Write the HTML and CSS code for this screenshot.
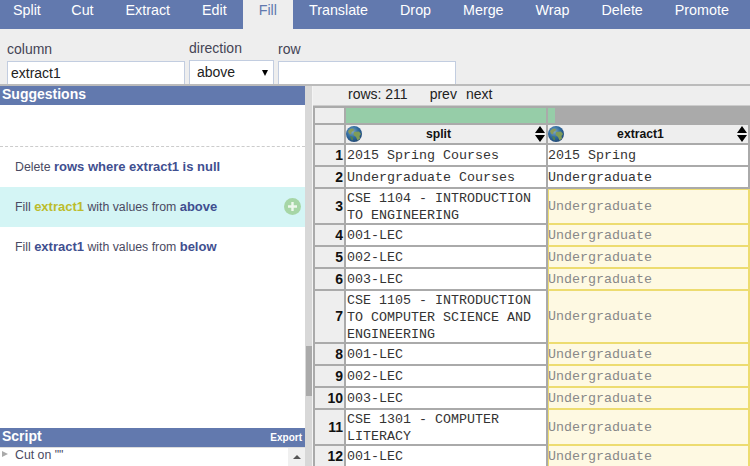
FILE: index.html
```html
<!DOCTYPE html>
<html lang="en">
<head>
    <meta charset="UTF-8">
    <title>Data Wrangler</title>
    <link rel="stylesheet" href="styles.css">
</head>
<body>
    <svg class="defs" width="0" height="0">
        <defs>
            <radialGradient id="sea" cx="0.4" cy="0.35" r="0.75">
                <stop offset="0" stop-color="#7fa8c4"/>
                <stop offset="0.5" stop-color="#2f6a9e"/>
                <stop offset="1" stop-color="#1d3f6b"/>
            </radialGradient>
            <symbol id="globe" viewBox="0 0 16 16">
                <circle cx="8" cy="8" r="8" fill="url(#sea)"/>
                <path d="M2 5 L5 2.5 L8 3 L7.5 5 L5.5 6 L5 8.5 L3 7.5 Z" fill="#8a9a5a"/>
                <path d="M8 6 L13 5.5 L15 8 L13.5 10 L14 12.5 L11.5 14.5 L10 11 L7.5 9 Z" fill="#7f9c58"/>
                <path d="M4 10 L7 11 L7 14.5 L5 13.5 Z" fill="#4f7f55"/>
            </symbol>
            <symbol id="sort" viewBox="0 0 10 16">
                <path d="M5 0 L10 7 L0 7 Z M0 9 L10 9 L5 16 Z" fill="#000"/>
            </symbol>
        </defs>
    </svg>

    <nav class="tabs">
        <a class="tab">Split</a>
        <a class="tab">Cut</a>
        <a class="tab">Extract</a>
        <a class="tab">Edit</a>
        <a class="tab active">Fill</a>
        <a class="tab">Translate</a>
        <a class="tab">Drop</a>
        <a class="tab">Merge</a>
        <a class="tab">Wrap</a>
        <a class="tab">Delete</a>
        <a class="tab">Promote</a>
    </nav>

    <form class="params">
        <div class="field">
            <label for="column">column</label>
            <input type="text" id="column" value="extract1">
        </div>
        <div class="field field-select">
            <label for="direction">direction</label>
            <div class="select-wrap">
                <select id="direction">
                    <option>above</option>
                    <option>below</option>
                </select>
            </div>
        </div>
        <div class="field">
            <label for="row">row</label>
            <input type="text" id="row">
        </div>
    </form>

    <main class="main">
        <section class="left">
            <h2 class="pane-title">Suggestions</h2>
            <div class="suggestions">
                <div class="suggestion"><span>Delete <b>rows where extract1 is null</b></span></div>
                <div class="suggestion selected">
                    <span>Fill <b class="hl">extract1</b> with values from <b>above</b></span>
                    <svg class="add" width="17" height="17" viewBox="0 0 17 17">
                        <circle cx="8.5" cy="8.5" r="8.5" fill="#a6d6a6"/>
                        <path d="M8.5 4 V13 M4 8.5 H13" stroke="#eef8ee" stroke-width="2.4"/>
                    </svg>
                </div>
                <div class="suggestion"><span>Fill <b>extract1</b> with values from <b>below</b></span></div>
            </div>
            <h2 class="pane-title">Script <span class="export">Export</span></h2>
            <div class="script">
                <span class="twisty"></span>
                <span class="script-line">Cut on ""</span>
                <span class="script-scroll"><i class="arrow-up"></i></span>
            </div>
        </section>

        <div class="splitter"><div class="thumb"></div></div>

        <section class="right">
            <div class="pager">
                <span>rows: 211</span>
                <span class="prev">prev</span>
                <span class="next">next</span>
            </div>
            <table class="grid">
                <colgroup>
                    <col class="col-num">
                    <col class="col-data">
                    <col class="col-data">
                </colgroup>
                <thead>
                    <tr class="quality">
                        <th class="num"></th>
                        <th><div class="bar good"></div></th>
                        <th><div class="bar mixed"><div class="bar-fill"></div></div></th>
                    </tr>
                    <tr class="heads">
                        <th class="num"></th>
                        <th>
                            <div class="head">
                                <svg class="globe" width="16" height="16"><use href="#globe"/></svg>
                                <span class="head-name">split</span>
                                <svg class="sort" width="10" height="16"><use href="#sort"/></svg>
                            </div>
                        </th>
                        <th>
                            <div class="head">
                                <svg class="globe" width="16" height="16"><use href="#globe"/></svg>
                                <span class="head-name">extract1</span>
                                <svg class="sort" width="10" height="16"><use href="#sort"/></svg>
                            </div>
                        </th>
                    </tr>
                </thead>
                <tbody>
                    <tr><td class="num">1</td><td>2015 Spring Courses</td><td>2015 Spring</td></tr>
                    <tr><td class="num">2</td><td>Undergraduate Courses</td><td>Undergraduate</td></tr>
                    <tr><td class="num">3</td><td class="wrapped">CSE 1104 - INTRODUCTION TO ENGINEERING</td><td class="filled first">Undergraduate</td></tr>
                    <tr><td class="num">4</td><td>001-LEC</td><td class="filled">Undergraduate</td></tr>
                    <tr><td class="num">5</td><td>002-LEC</td><td class="filled">Undergraduate</td></tr>
                    <tr><td class="num">6</td><td>003-LEC</td><td class="filled">Undergraduate</td></tr>
                    <tr><td class="num">7</td><td class="wrapped">CSE 1105 - INTRODUCTION TO COMPUTER SCIENCE AND ENGINEERING</td><td class="filled">Undergraduate</td></tr>
                    <tr><td class="num">8</td><td>001-LEC</td><td class="filled">Undergraduate</td></tr>
                    <tr><td class="num">9</td><td>002-LEC</td><td class="filled">Undergraduate</td></tr>
                    <tr><td class="num">10</td><td>003-LEC</td><td class="filled">Undergraduate</td></tr>
                    <tr><td class="num">11</td><td class="wrapped">CSE 1301 - COMPUTER LITERACY</td><td class="filled">Undergraduate</td></tr>
                    <tr><td class="num">12</td><td>001-LEC</td><td class="filled">Undergraduate</td></tr>
                </tbody>
            </table>
        </section>
    </main>
</body>
</html>
```

FILE: styles.css
```css
* {
    margin: 0;
    padding: 0;
    box-sizing: border-box;
}
html, body {
    height: 466px;
    overflow: hidden;
}
body {
    display: flex;
    flex-direction: column;
    font-family: "Liberation Sans", Arial, sans-serif;
    font-size: 14px;
    color: #333;
    background: #eee;
}
.defs {
    position: absolute;
}

/* tabs */
.tabs {
    display: flex;
    flex: none;
    height: 29px;
    background: #6279ae;
}
.tab {
    padding: 0 16px;
    font-size: 14.3px;
    line-height: 21px;
    color: #fff;
}
.tab:first-child {
    padding: 0 14.5px 0 13px;
}
.tab.active {
    background: #eee;
    color: #6279ae;
}

/* transform parameters */
.params {
    display: flex;
    flex: none;
    gap: 4px;
    height: 57px;
    padding: 12px 0 0 7px;
    background: #eee;
    border-bottom: 2px solid #bbb;
    overflow: hidden;
}
.field {
    display: flex;
    flex-direction: column;
    gap: 4px;
    width: 178px;
    height: 60px;
}
.field-select {
    width: 85px;
    margin-top: -1px;
}
.field label {
    height: 16px;
    line-height: 16px;
    color: #445;
}
.field input,
.field select {
    width: 100%;
    height: 28px;
    padding: 0 3px 4px;
    border: 1px solid #c2cde0;
    border-radius: 0;
    background: #fff;
    font-family: inherit;
    font-size: 14px;
    color: #222;
    outline: none;
}
.select-wrap {
    position: relative;
}
.field select {
    appearance: none;
    padding: 0 0 4px 7px;
}
.select-wrap::after {
    content: "";
    position: absolute;
    left: 73px;
    top: 10px;
    border-left: 3.5px solid transparent;
    border-right: 3.5px solid transparent;
    border-top: 6px solid #000;
}

/* panes */
.main {
    display: flex;
    flex: 1;
    min-height: 0;
}
.left {
    display: flex;
    flex-direction: column;
    flex: none;
    width: 305px;
    background: #fff;
}
.pane-title {
    display: flex;
    justify-content: space-between;
    align-items: center;
    flex: none;
    height: 19px;
    padding: 0 3px 3px 2px;
    background: #6279ae;
    font-size: 14px;
    font-weight: bold;
    color: #fff;
}
.export {
    padding-top: 3px;
    font-size: 10px;
}
.suggestions {
    flex: 1;
    padding-top: 41px;
}
.suggestions::before {
    content: "";
    display: block;
    border-top: 1px dashed #ccc;
}
.suggestion {
    display: flex;
    align-items: center;
    height: 40px;
    padding: 0 4px 2px 15px;
    font-size: 12.3px;
    color: #4a4a62;
}
.suggestion b {
    font-size: 13px;
    color: #3f4f90;
}
.suggestion.selected {
    justify-content: space-between;
    background: #d4f5f5;
}
.suggestion b.hl {
    color: #bcbc2c;
}
.script {
    display: flex;
    flex: none;
    align-items: flex-start;
    height: 19px;
    border-top: 1px solid #ddd;
}
.twisty {
    flex: none;
    margin: 3px 0 0 2px;
    border-top: 3.5px solid transparent;
    border-bottom: 3.5px solid transparent;
    border-left: 6px solid #aaa;
}
.script-line {
    flex: 1;
    padding: 1px 0 0 7px;
    font-size: 12.3px;
    line-height: 13px;
    color: #4a4a62;
}
.script-scroll {
    display: flex;
    justify-content: center;
    flex: none;
    width: 17px;
    height: 100%;
    background: #f0f0f0;
}
.arrow-up {
    margin-top: 7px;
    height: 0;
    border-left: 4px solid transparent;
    border-right: 4px solid transparent;
    border-bottom: 4px solid #555;
}

.splitter {
    flex: none;
    width: 8px;
    padding-left: 1px;
    background: #d8d8d8;
    border-right: 1px solid #f4f4f4;
}
.thumb {
    width: 6px;
    height: 50px;
    margin-top: 260px;
    background: #aaa;
}

/* data table */
.right {
    flex: 1;
    min-width: 0;
    overflow: hidden;
}
.pager {
    display: flex;
    height: 20px;
    padding-left: 35px;
    line-height: 16px;
    border-bottom: 1px solid #ccc;
    color: #222;
    background: #eee;
}
.prev {
    margin-left: 22px;
}
.next {
    margin-left: 9px;
}
.grid {
    border-collapse: separate;
    border-spacing: 0;
    table-layout: fixed;
    width: 437px;
    background: #fff;
    border-left: 2px solid #aaa;
    border-top: 2px solid #aaa;
}
.col-num {
    width: 31px;
}
.col-data {
    width: 202px;
}
.grid th,
.grid td {
    padding: 0;
    border-right: 2px solid #aaa;
    border-bottom: 2px solid #aaa;
    background: #fff;
}
.grid td {
    height: 22px;
    padding-left: 1px;
    font-family: "Liberation Mono", "Courier New", monospace;
    font-size: 13.33px;
    line-height: 17px;
    color: #333;
    vertical-align: middle;
}
.grid td:last-child {
    padding-left: 0;
}
.grid td.wrapped {
    padding-top: 1px;
}
.grid td.wrapped::after {
    content: "";
    display: block;
    margin-top: -1px;
}
.grid .num {
    padding: 0 1px 0 0;
    background: #eee;
    font-family: "Liberation Sans", Arial, sans-serif;
    font-size: 14px;
    font-weight: bold;
    color: #111;
    text-align: right;
}
.grid td.filled {
    border-color: #eddc70;
    background: #fef9e2;
    color: #888;
    box-shadow: inset 1px 0 0 #eddc70;
}
.grid td.filled.first {
    box-shadow: inset 1px 1px 0 #eddc70;
}
.quality th {
    height: 17px;
}
.bar {
    height: 15px;
}
.bar.good {
    background: #96cda8;
}
.bar.mixed {
    background: #aaa;
}
.bar-fill {
    width: 7px;
    height: 100%;
    background: #96cda8;
}
.heads th {
    height: 20px;
    background: #eee;
}
.head {
    display: flex;
    align-items: center;
    height: 18px;
}
.globe {
    flex: none;
}
.head-name {
    flex: 1;
    padding-right: 20px;
    font-size: 12.2px;
    font-weight: bold;
    color: #111;
    text-align: center;
}
.sort {
    flex: none;
    margin-right: 1px;
}
```
